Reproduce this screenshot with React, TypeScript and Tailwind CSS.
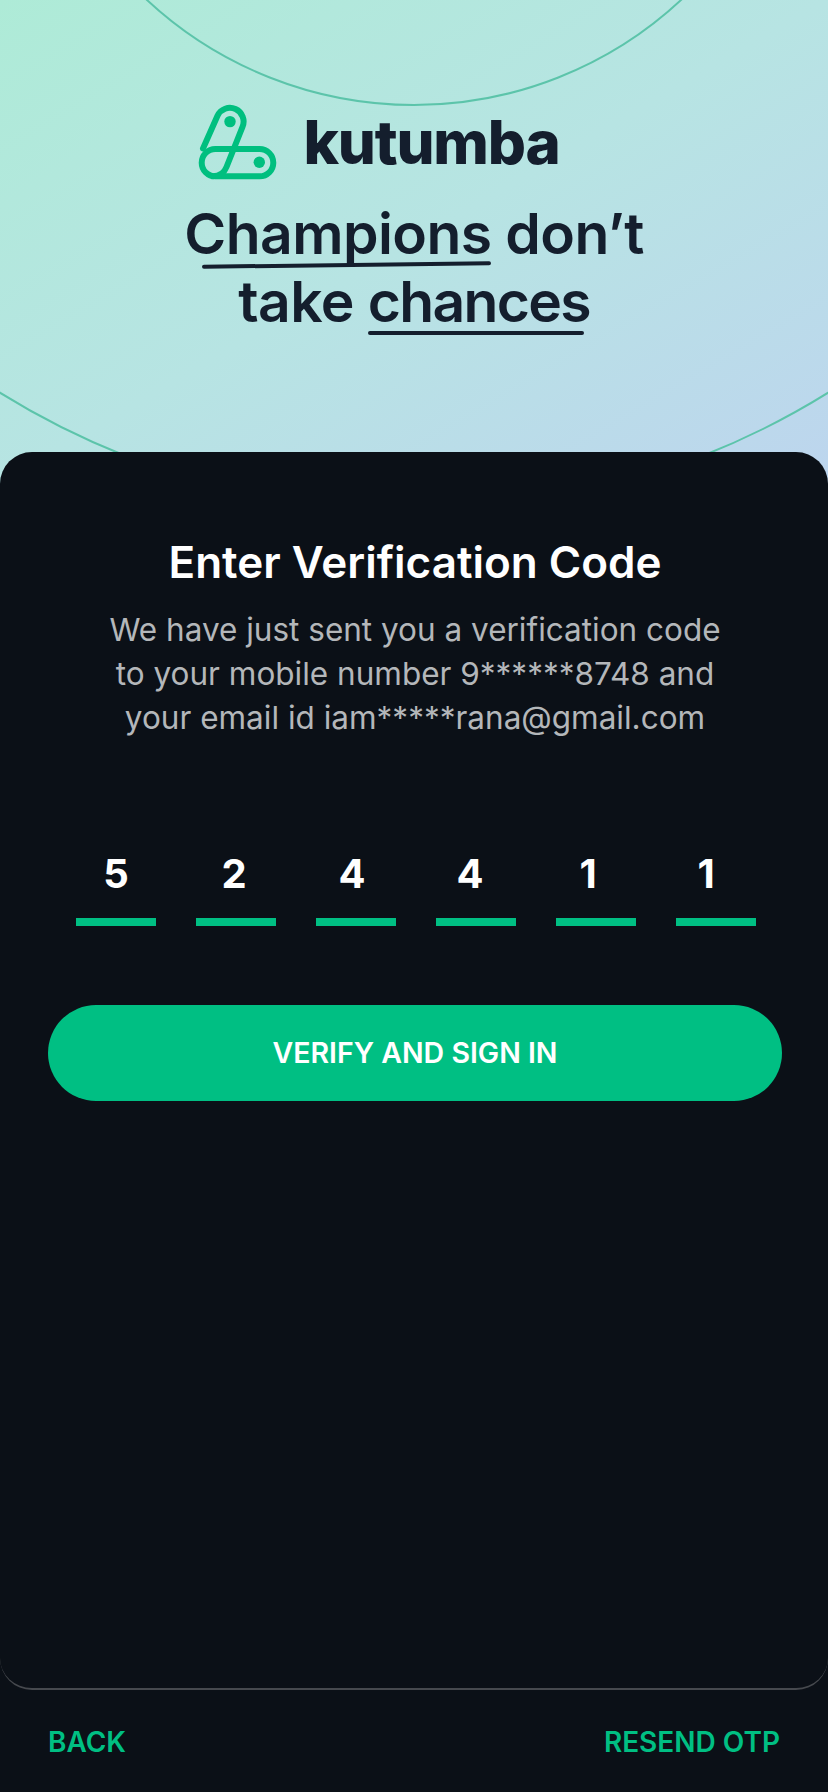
const digits = ["5", "2", "4", "4", "1", "1"];

function Logo() {
  return (
    <svg width="80" height="76" viewBox="0 0 80 76" fill="none" stroke="#00bf7f" strokeWidth="6" strokeLinecap="round" strokeLinejoin="round">
      <rect x="3.7" y="45" width="71.6" height="27.3" rx="13.65" />
      <path d="M5 44.5 L19.5 11.7 A13.7 13.7 0 0 1 44.5 22.9 L28.5 63 Q25 72 15 72.3" />
      <circle cx="32" cy="17.6" r="5.7" fill="#00bf7f" stroke="none" />
      <circle cx="61.3" cy="58.2" r="5.7" fill="#00bf7f" stroke="none" />
    </svg>
  );
}

export default function App() {
  return (
    <div className="flex h-[1792px] w-[828px] flex-col overflow-hidden bg-[#0b1017] font-['Inter',sans-serif]">
      <header className="relative -mb-8 flex h-[484px] shrink-0 flex-col items-center overflow-hidden bg-gradient-to-br from-[#aeebd7] via-[#b7e4e3] to-[#bdd5ee] pt-[104px] text-[#141e2d]">
        <svg className="absolute left-0 top-0" width="828" height="484" fill="none" stroke="#5cc4aa" strokeWidth="2">
          <circle cx="414" cy="-287" r="392" />
          <circle cx="414" cy="-272" r="783" />
        </svg>
        <div className="relative flex items-center gap-[25px] pr-[70px]">
          <Logo />
          <span className="text-[60px] font-extrabold leading-[76px] tracking-[-0.02em]">kutumba</span>
        </div>
        <h1 className="relative mt-[20px] text-center text-[57px] font-semibold leading-[68px] tracking-[-0.01em]">
          <span className="relative">
            Champions
            <span className="absolute bottom-[1px] left-[18px] right-0 h-1 -rotate-[0.7deg] rounded-full bg-[#141e2d]" />
          </span>{" "}
          don’t
          <br />
          take{" "}
          <span className="relative tracking-[-0.03em]">
            chances
            <span className="absolute bottom-[1px] left-0 right-[6px] h-1 rounded-full bg-[#141e2d]" />
          </span>
        </h1>
      </header>

      <main className="relative flex h-[1238px] shrink-0 flex-col items-center rounded-[32px] border-b-2 border-b-[#46494e] bg-[#0b1017] pl-12 pr-[46px] pt-[82px]">
        <h2 className="text-[44px] font-semibold leading-[56px] text-white">Enter Verification Code</h2>
        <p className="mt-[18px] text-center text-[31.5px] leading-[44px] text-[#b4b7ba]">
          We have just sent you a verification code
          <br />
          to your mobile number 9******8748 and
          <br />
          your email id iam*****rana@gmail.com
        </p>
        <div className="ml-[2px] mt-[109px] flex w-[680px] flex-col gap-[19px]">
          <div className="flex gap-[38px]">
            {digits.map((d, i) => (
              <span key={i} className="w-20 text-center text-[40px] font-bold leading-[50px] text-white">
                {d}
              </span>
            ))}
          </div>
          <div className="flex gap-10">
            {digits.map((_, i) => (
              <span key={i} className="h-2 w-20 bg-[#00bf83]" />
            ))}
          </div>
        </div>
        <button className="mt-[79px] h-24 w-full rounded-full bg-[#00bf83] text-[28.5px] font-semibold text-white">
          VERIFY AND SIGN IN
        </button>
      </main>

      <footer className="flex flex-1 items-center justify-between px-12 pt-[2px] text-[28px] font-semibold text-[#00bf83]">
        <span>BACK</span>
        <span>RESEND OTP</span>
      </footer>
    </div>
  );
}
